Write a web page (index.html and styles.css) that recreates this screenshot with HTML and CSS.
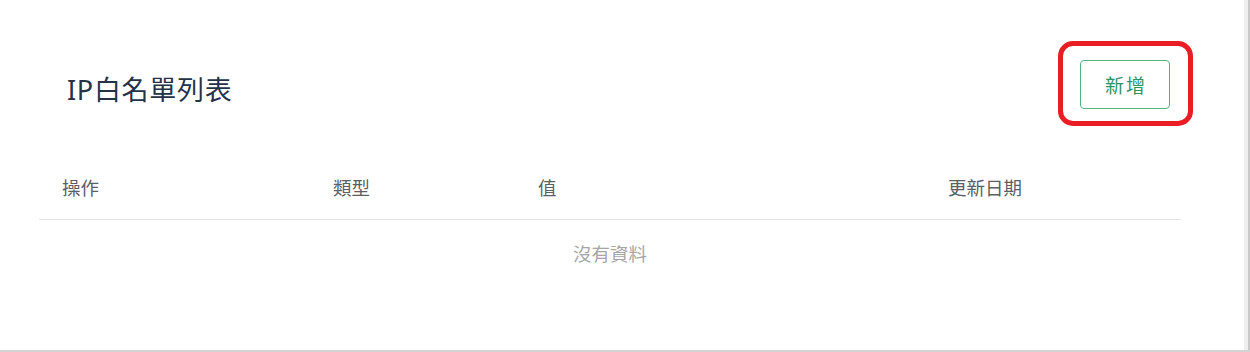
FILE: index.html
```html
<!DOCTYPE html>
<html lang="zh-Hant">
<head>
<meta charset="utf-8">
<title>IP白名單列表</title>
<link rel="stylesheet" href="styles.css">
</head>
<body>
<div class="frame">
  <main class="card">
    <header class="card-head">
      <h1 class="title">IP白名單列表</h1>
      <div class="highlight">
        <button class="btn-add" type="button">新增</button>
      </div>
    </header>
    <table class="list">
      <colgroup>
        <col class="c-op">
        <col class="c-type">
        <col class="c-val">
        <col class="c-date">
      </colgroup>
      <thead>
        <tr>
          <th>操作</th>
          <th>類型</th>
          <th>值</th>
          <th>更新日期</th>
        </tr>
      </thead>
      <tbody>
        <tr>
          <td class="empty" colspan="4">沒有資料</td>
        </tr>
      </tbody>
    </table>
  </main>
  <div class="scrollbar"></div>
</div>
</body>
</html>
```

FILE: styles.css
```css
html, body {
  margin: 0;
  padding: 0;
  background: #ffffff;
}

body {
  font-family: "Noto Sans", "Noto Sans CJK TC", sans-serif;
}

.frame {
  display: flex;
  width: 1250px;
  height: 352px;
  box-sizing: border-box;
  border-bottom: 2px solid #d3d3d3;
  overflow: hidden;
}

.card {
  flex: 1;
  padding: 41px 0 0 39px;
  box-sizing: border-box;
}

.scrollbar {
  width: 4px;
  background: #efefef;
  border-right: 2px solid #c9c9c9;
}

.card-head {
  display: flex;
  justify-content: space-between;
  align-items: flex-start;
  margin-right: 51px;
}

.title {
  margin: 31px 0 0 28px;
  font-size: 27px;
  line-height: 36px;
  font-weight: 400;
  color: #24324a;
  letter-spacing: 0.7px;
}

.highlight {
  border: 5px solid #ea1c24;
  border-radius: 15px;
  padding: 14px 18px 12px 17px;
}

.btn-add {
  display: block;
  width: 90px;
  height: 49px;
  box-sizing: border-box;
  border: 1px solid #52b481;
  border-radius: 4px;
  background: #ffffff;
  color: #2f9462;
  font-family: "Noto Sans CJK TC", sans-serif;
  font-size: 19px;
  letter-spacing: 2px;
  padding: 0 0 0 2px;
  cursor: pointer;
}

.list {
  margin-top: 28px;
  width: 1142px;
  border-collapse: collapse;
  table-layout: fixed;
}

.c-op { width: 271px; }
.c-type { width: 205px; }
.c-val { width: 410px; }
.c-date { width: 256px; }

.list th {
  height: 65px;
  padding: 0 0 0 23px;
  text-align: left;
  font-family: "Noto Sans CJK TC", sans-serif;
  font-size: 18.5px;
  font-weight: 400;
  color: #5b5f66;
  border-bottom: 1px solid #e3e3e3;
}

.list td.empty {
  height: 66px;
  padding: 0 0 6px;
  text-align: center;
  font-family: "Noto Sans CJK TC", sans-serif;
  font-size: 18.5px;
  color: #a6a6a6;
}
```
